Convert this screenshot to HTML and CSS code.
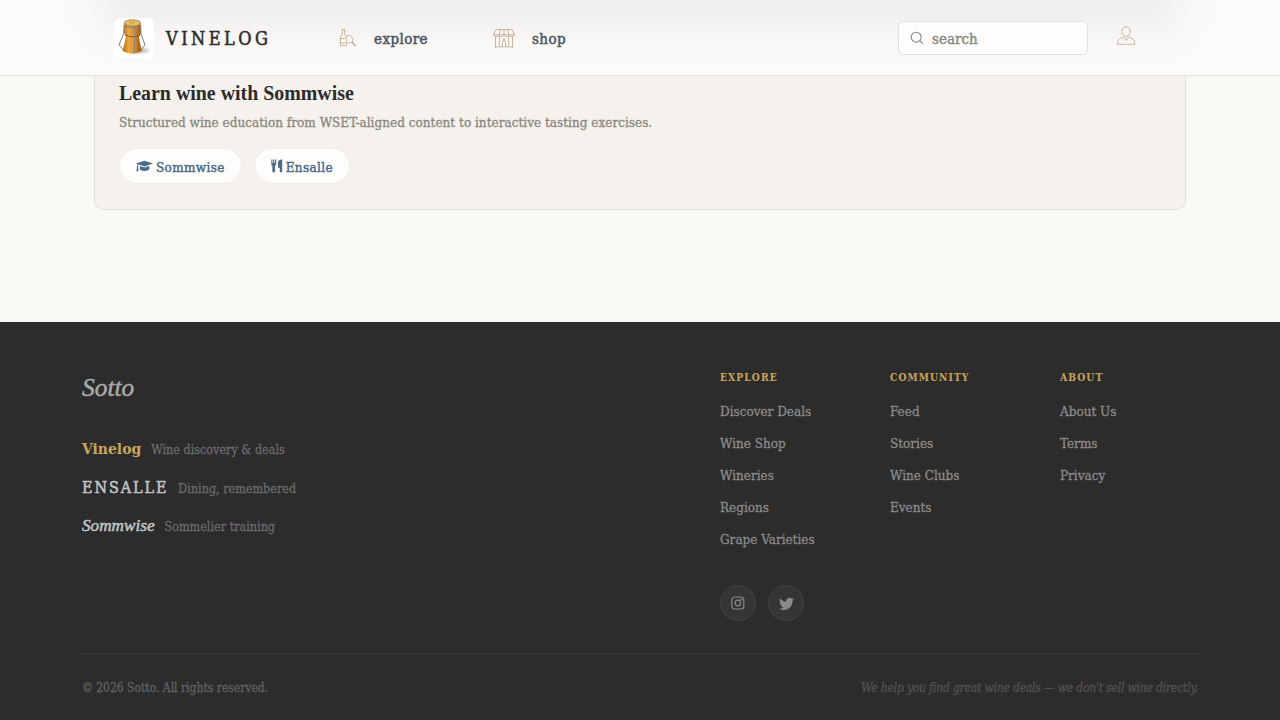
FILE: index.html
```html
<!DOCTYPE html>
<html lang="en">
<head>
  <meta charset="UTF-8">
  <title>Vinelog</title>
  <link rel="stylesheet" href="styles.css">
</head>
<body>
  <header class="topbar">
    <a class="brand" href="#">
      <svg class="brand-logo" viewBox="0 0 40 40" width="40" height="40">
        <defs>
          <linearGradient id="cork" x1="0" x2="1">
            <stop offset="0" stop-color="#b06a12"/>
            <stop offset=".3" stop-color="#e9a842"/>
            <stop offset=".6" stop-color="#dc9431"/>
            <stop offset="1" stop-color="#965509"/>
          </linearGradient>
          <radialGradient id="shade">
            <stop offset="0" stop-color="#8d8172" stop-opacity=".7"/>
            <stop offset="1" stop-color="#8d8172" stop-opacity="0"/>
          </radialGradient>
        </defs>
        <rect width="40" height="40" rx="6" fill="#fff"/>
        <ellipse cx="25" cy="32.5" rx="13" ry="4.5" fill="url(#shade)"/>
        <path d="M10.3 5 L9.8 14 Q10.5 17 12 18.2 Q10.5 25 8.7 33 Q18 38.5 27.6 33 Q26 25 24.8 18.2 Q26.8 17 27.2 14 L26.5 5 Z" fill="url(#cork)"/>
        <path d="M11 17 Q18 20.5 26 17" fill="none" stroke="#8b5110" stroke-width="1"/>
        <ellipse cx="18.4" cy="4.9" rx="8.2" ry="3.2" fill="#e8bd58" stroke="#88795a" stroke-width=".7"/>
        <path d="M16 4 L17.5 5 M20 3.6 L19 5" stroke="#765b24" stroke-width=".6"/>
        <path d="M10 7 L9.8 15 L5 27 L9.5 32 M26.7 7 L26.8 15 L31 27 L27 32 M20.6 8 L20.4 35.5 M10 8 Q18 11.5 26.8 8" fill="none" stroke="#8a8476" stroke-width="1"/>
      </svg>
      <span class="brand-name">VINELOG</span>
    </a>
    <nav class="nav">
      <a class="nav-link" href="#">
        <svg class="line-icon" viewBox="0 0 20 20" width="20" height="20">
          <path d="M3 1.4h3M3.3 1.5v5.2Q1.4 7.8 1.4 9.5v8.2h5.9V9.5Q7.3 7.8 5.7 6.7V1.5M1.4 10.5h4.5M1.4 15h4.5"/>
          <path d="M6.8 8.5Q8 7.3 10.2 7.3t3.8 3.9q0 3.7-3.8 3.9-1.6 0-2.9-.9"/>
          <path d="M13 14l3.6 4" stroke-width="1.5"/>
        </svg>
        <span>explore</span>
      </a>
      <a class="nav-link shop" href="#">
        <svg class="line-icon" viewBox="0 0 22 20" width="22" height="20">
          <path d="M3 1.5h16l2.5 5.3H.5zM7.3 1.5L6 7M11 1.5V7M14.7 1.5L16 7M.5 7c0 2 5.2 2 5.2 0 0 2 5.3 2 5.3 0 0 2 5.3 2 5.3 0 0 2 5.2 2 5.2 0M2.5 8.5v10.3M6.3 8.5v10.3M15.7 8.5v10.3M19.5 8.5v10.3M1 18.8h20M9.4 18.5v-4l1-1.3v-2.4h1.2v2.4l1 1.3v4"/>
        </svg>
        <span>shop</span>
      </a>
    </nav>
    <div class="search">
      <svg viewBox="0 0 14 14" width="14" height="14">
        <circle cx="6.2" cy="6.2" r="5"/>
        <path d="M9.9 9.9l3 3"/>
      </svg>
      <span>search</span>
    </div>
    <svg class="line-icon user" viewBox="0 0 20 20" width="20" height="20">
      <ellipse cx="10.2" cy="5.6" rx="4.1" ry="4.8"/>
      <path d="M7.8 11.3C4 12.2 1.5 12.5 1.5 18.3h17.2c0-5.8-2.5-6.1-6.3-7l-2.2 3.1z"/>
    </svg>
  </header>

  <main>
    <section class="learn-card">
      <h2>Learn wine with Sommwise</h2>
      <p>Structured wine education from WSET-aligned content to interactive tasting exercises.</p>
      <div class="pills">
        <a class="pill" href="#">
          <svg viewBox="0 0 17 12" width="17" height="12">
            <path d="M8.5 .8L17 3.6 8.5 6.4 3 4.6Q2 5.2 1.9 6.6 2.7 7.1 2.2 8L2.6 11.2H.4L.9 8Q.4 7.1 1.1 6.5 1.1 5.1 1.8 4.2L0 3.6Z"/>
            <path d="M4 6l4.5 1.5L13.2 6l.3 3q-1.2 1.9-5 1.9T3.7 9z"/>
          </svg>
          <span>Sommwise</span>
        </a>
        <a class="pill" href="#">
          <svg viewBox="0 0 12 14" width="12" height="14">
            <path d="M.3.5h1.1V4h.8V.5h1.1V4h.8V.5h1.1v4.7q0 1-1.2 1.6v5.6q0 1.1-1.3 1.1t-1.3-1.1V6.8Q.3 6.2.3 5.2z"/>
            <path d="M11.2.5v12q0 1-1.2 1t-1.2-1V8.8H7V3.6Q7 .5 11.2.5z"/>
          </svg>
          <span>Ensalle</span>
        </a>
      </div>
    </section>
  </main>

  <footer class="footer">
    <div class="footer-main">
      <div class="family">
        <div class="sotto">Sotto</div>
        <div class="product"><span class="name vinelog">Vinelog</span><span class="tagline">Wine discovery &amp; deals</span></div>
        <div class="product"><span class="name ensalle">ENSALLE</span><span class="tagline">Dining, remembered</span></div>
        <div class="product"><span class="name sommwise">Sommwise</span><span class="tagline">Sommelier training</span></div>
      </div>
      <div class="links">
        <div class="column">
          <h3>EXPLORE</h3>
          <a href="#">Discover Deals</a>
          <a href="#">Wine Shop</a>
          <a href="#">Wineries</a>
          <a href="#">Regions</a>
          <a href="#">Grape Varieties</a>
        </div>
        <div class="column">
          <h3>COMMUNITY</h3>
          <a href="#">Feed</a>
          <a href="#">Stories</a>
          <a href="#">Wine Clubs</a>
          <a href="#">Events</a>
        </div>
        <div class="column">
          <h3>ABOUT</h3>
          <a href="#">About Us</a>
          <a href="#">Terms</a>
          <a href="#">Privacy</a>
        </div>
        <div class="social">
          <a href="#" aria-label="Instagram">
            <svg viewBox="0 0 14 14" width="14" height="14" fill="none" stroke="#8b8b8b" stroke-width="1.2">
              <rect x=".8" y="1" width="12" height="12" rx="3"/>
              <circle cx="6.8" cy="7" r="2.8"/>
              <circle cx="10.3" cy="3.5" r=".4"/>
            </svg>
          </a>
          <a href="#" aria-label="Twitter">
            <svg viewBox="0 0 16 16" width="15" height="15" fill="#8b8b8b">
              <path d="M5.026 15c6.038 0 9.341-5.003 9.341-9.334q.002-.211-.006-.422A6.7 6.7 0 0 0 16 3.542a6.7 6.7 0 0 1-1.889.518 3.3 3.3 0 0 0 1.447-1.817 6.5 6.5 0 0 1-2.087.793A3.286 3.286 0 0 0 7.875 6.03a9.32 9.32 0 0 1-6.767-3.429 3.29 3.29 0 0 0 1.018 4.382A3.3 3.3 0 0 1 .64 6.575v.045a3.29 3.29 0 0 0 2.632 3.218 3.2 3.2 0 0 1-.865.115 3 3 0 0 1-.614-.057 3.28 3.28 0 0 0 3.067 2.277A6.6 6.6 0 0 1 .78 13.58a6 6 0 0 1-.78-.045A9.34 9.34 0 0 0 5.026 15"/>
            </svg>
          </a>
        </div>
      </div>
    </div>
    <div class="footer-bottom">
      <span>© 2026 Sotto. All rights reserved.</span>
      <em>We help you find great wine deals — we don't sell wine directly.</em>
    </div>
  </footer>
</body>
</html>
```
FILE: styles.css
```css
* {
  box-sizing: border-box;
}
body {
  margin: 0;
  height: 720px;
  overflow: hidden;
  display: flex;
  flex-direction: column;
  background: #faf8f4;
  color: #2c2c2c;
  font-family: "DejaVu Serif Condensed", "DejaVu Serif", serif;
  font-size: 13.4px;
}
a {
  color: inherit;
  text-decoration: none;
}
svg {
  display: block;
  flex: none;
}

/* Top bar */
.topbar {
  position: relative;
  display: flex;
  align-items: center;
  flex: none;
  height: 76px;
  padding-left: 114px;
  border-bottom: 1px solid #e8e6e2;
  background: #fcfbf9;
  overflow: hidden;
}
.topbar::before {
  content: "";
  position: absolute;
  top: -60px;
  left: 100px;
  right: 100px;
  height: 90px;
  background: rgba(44, 44, 44, 0.065);
  filter: blur(20px);
}
.topbar > * {
  position: relative;
}
.brand {
  display: flex;
  align-items: center;
  gap: 12px;
  width: 225px;
}
.brand-name {
  padding-top: 2px;
  font-size: 18px;
  letter-spacing: 3.5px;
  -webkit-text-stroke: 0.5px;
}
.nav {
  display: flex;
}
.nav-link {
  display: flex;
  align-items: center;
  gap: 15px;
  width: 154px;
  color: #4a5568;
  font-size: 15px;
  letter-spacing: 0.4px;
  line-height: 22px;
  -webkit-text-stroke: 0.5px;
}
.nav-link span {
  padding-top: 2px;
}
.nav-link.shop {
  gap: 17px;
}
.line-icon {
  fill: none;
  stroke: #c2ae91;
  stroke-width: 0.9;
}
.search {
  display: flex;
  align-items: center;
  gap: 8px;
  width: 190px;
  height: 34px;
  margin-left: 251px;
  padding-left: 11px;
  border: 1px solid #e3e1dd;
  border-radius: 6px;
  background: #fefdfc;
  color: #8a8780;
  font-size: 15px;
  -webkit-text-stroke: 0.4px;
}
.search span {
  padding-top: 2px;
}
.search svg {
  fill: none;
  stroke: #8a8780;
  stroke-width: 1.1;
}
.user {
  margin: 0 0 4px 28px;
}

/* Learn card */
main {
  flex: none;
  height: 246px;
  padding: 0 94px;
}
.learn-card {
  height: 134px;
  padding: 5px 24px 0;
  border: 1px solid #e3e1dc;
  border-top: 0;
  border-radius: 0 0 10px 10px;
  background: #f5f1ec;
}
.learn-card h2 {
  margin: 0;
  font: bold 19.9px/24px "Liberation Serif", serif;
}
.learn-card p {
  margin: 8px 0 0;
  color: #8a8780;
  line-height: 20px;
  letter-spacing: 0.02px;
  -webkit-text-stroke: 0.3px;
}
.pills {
  display: flex;
  gap: 12px;
  margin-top: 15px;
}
.pill {
  display: flex;
  align-items: center;
  gap: 3px;
  height: 36px;
  padding: 0 16px;
  border: 1px solid #f0ece6;
  border-radius: 18px;
  background: #fefdfc;
  color: #4a6b8a;
  font-size: 13.4px;
  letter-spacing: 0.36px;
  -webkit-text-stroke: 0.45px;
}
.pill span {
  padding-top: 2px;
}
.pill svg {
  fill: #4a6b8a;
}

/* Footer */
.footer {
  flex: 1;
  padding: 47px 82px 0;
  background: #2c2c2c;
}
.footer-main {
  display: flex;
  justify-content: space-between;
  height: 284px;
}
.sotto {
  margin: 3px 0 35px;
  color: #a9a9a9;
  font: italic 25.4px/30px "Liberation Serif", serif;
  -webkit-text-stroke: 0.5px;
}
.product {
  display: flex;
  align-items: baseline;
  gap: 10px;
  height: 38.5px;
  line-height: 24px;
}
.name {
  color: #c4c4c4;
}
.name.vinelog {
  color: #c9a55c;
  font-size: 15.5px;
  font-weight: bold;
}
.name.ensalle {
  font-size: 16px;
  letter-spacing: 1.9px;
  -webkit-text-stroke: 0.5px;
}
.name.sommwise {
  font: italic 17.2px/24px "Liberation Serif", serif;
  -webkit-text-stroke: 0.5px;
}
.tagline {
  color: #6b6b6b;
  font-size: 12.4px;
  letter-spacing: 0.04px;
  -webkit-text-stroke: 0.3px;
}
.links {
  display: grid;
  grid-template-columns: repeat(3, 170px);
  grid-template-rows: 216px 36px;
  width: 478px;
}
.column h3 {
  margin: 0 0 18px;
  color: #c9a55c;
  font-size: 10.2px;
  line-height: 16px;
  letter-spacing: 1.1px;
}
.column a {
  display: block;
  height: 32px;
  color: #8b8b8b;
  font-size: 13.4px;
  line-height: 18px;
  -webkit-text-stroke: 0.3px;
}
.social {
  display: flex;
  gap: 12px;
}
.social a {
  display: flex;
  align-items: center;
  justify-content: center;
  width: 36px;
  height: 36px;
  border: 1px solid #434343;
  border-radius: 50%;
  background: #353535;
}
.footer-bottom {
  display: flex;
  justify-content: space-between;
  padding-top: 24px;
  border-top: 1px solid #393939;
  color: #626262;
  font-size: 12px;
  line-height: 20px;
  -webkit-text-stroke: 0.3px;
}
.footer-bottom em {
  color: #525252;
  letter-spacing: -0.19px;
}
```
